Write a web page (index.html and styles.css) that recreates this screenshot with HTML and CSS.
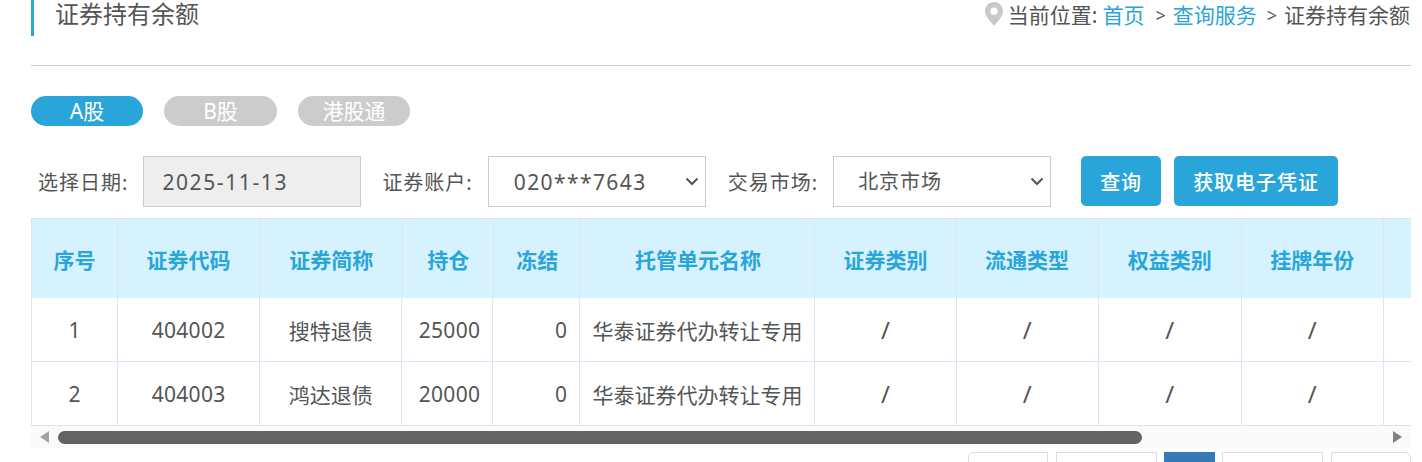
FILE: index.html
```html
<!DOCTYPE html>
<html lang="zh-CN">
<head>
    <meta charset="UTF-8">
    <title>证券持有余额</title>
    <link rel="stylesheet" href="styles.css">
</head>
<body>
    <div class="container">
        <div class="page-head">
            <h2 class="page-title">证券持有余额</h2>
            <div class="crumbs">
                <svg class="pin" width="18" height="24" viewBox="0 0 18 24">
                    <path fill-rule="evenodd" fill="#c9c9c9" d="M9 0C4 0 0 4 0 9c0 6 6 11 9 15 3-4 9-9 9-15 0-5-4-9-9-9zm0 5.5a3.7 3.7 0 1 1 0 7.4 3.7 3.7 0 0 1 0-7.4z"/>
                </svg>
                <span>当前位置:</span>
                <a href="#" class="first">首页</a>
                <span class="sep wide-sep">&gt;</span>
                <a href="#">查询服务</a>
                <span class="sep">&gt;</span>
                <span>证券持有余额</span>
            </div>
        </div>

        <div class="tabs">
            <a href="#" class="tab active">A股</a>
            <a href="#" class="tab mid">B股</a>
            <a href="#" class="tab">港股通</a>
        </div>

        <div class="search">
            <label class="first-label">选择日期:</label>
            <input class="field date" type="text" value="2025-11-13" readonly>
            <label class="account-label">证券账户:</label>
            <select class="field account">
                <option>020***7643</option>
            </select>
            <label>交易市场:</label>
            <select class="field">
                <option>北京市场</option>
            </select>
            <button class="btn query">查询</button>
            <button class="btn">获取电子凭证</button>
        </div>

        <div class="table-wrap">
            <table class="grid head">
                <colgroup>
                    <col class="c1"><col class="c2"><col class="c3"><col class="c4"><col class="c5">
                    <col class="c6"><col class="c7"><col class="c8"><col class="c9"><col class="c10"><col class="c11">
                </colgroup>
                <tr>
                    <th>序号</th><th>证券代码</th><th>证券简称</th><th>持仓</th><th>冻结</th>
                    <th>托管单元名称</th><th>证券类别</th><th>流通类型</th><th>权益类别</th><th>挂牌年份</th><th></th>
                </tr>
            </table>
            <table class="grid body">
                <colgroup>
                    <col class="c1"><col class="c2"><col class="b3"><col class="c4"><col class="c5">
                    <col class="b6"><col class="c7"><col class="c8"><col class="c9"><col class="c10"><col class="c11">
                </colgroup>
                <tr>
                    <td>1</td><td class="code">404002</td><td>搜特退债</td><td class="num">25000</td><td class="num">0</td>
                    <td>华泰证券代办转让专用</td><td class="na">/</td><td class="na">/</td><td class="na">/</td><td class="na">/</td><td></td>
                </tr>
                <tr>
                    <td>2</td><td class="code">404003</td><td>鸿达退债</td><td class="num">20000</td><td class="num">0</td>
                    <td>华泰证券代办转让专用</td><td class="na">/</td><td class="na">/</td><td class="na">/</td><td class="na">/</td><td></td>
                </tr>
            </table>
        </div>

        <div class="scrollbar">
            <span class="arrow left"></span>
            <div class="track"><div class="thumb"></div></div>
            <span class="arrow right"></span>
        </div>

        <ul class="pager">
            <li class="end-l"></li>
            <li class="wide"></li>
            <li class="current"></li>
            <li class="wide"></li>
            <li class="end-r"></li>
        </ul>
    </div>
</body>
</html>
```

FILE: styles.css
```css
html, body {
    height: 462px;
    overflow: hidden;
}

body {
    margin: 0;
    background: #fff;
    color: #555;
    font-family: "Noto Sans", "Noto Sans CJK SC", sans-serif;
}

a {
    color: #29a5d9;
    text-decoration: none;
}

.container {
    width: 1380px;
    margin-left: 31px;
}

/* title row */
.page-head {
    display: flex;
    justify-content: space-between;
    height: 65px;
    border-bottom: 1px solid #ccc;
}

.page-title {
    height: 36px;
    margin: 0;
    padding-left: 21px;
    border-left: 3px solid #29a5d9;
    font-size: 24px;
    font-weight: normal;
    line-height: 28px;
}

.crumbs {
    display: flex;
    align-items: flex-start;
    height: 30px;
    margin-right: 1px;
    font-size: 21px;
    line-height: 30px;
    white-space: nowrap;
}

.pin {
    margin: 2px 5px 0 0;
}

.crumbs .first {
    margin-left: 5px;
}

.sep {
    margin: 0 7px 0 10px;
    font-size: 18px;
}

.wide-sep {
    margin-left: 11px;
}

/* tabs */
.tabs {
    display: flex;
    gap: 21px;
    margin-top: 30px;
}

.tab {
    width: 112px;
    height: 30px;
    border-radius: 15px;
    background: #ccc;
    color: #fff;
    font-size: 21px;
    line-height: 30px;
    text-align: center;
}

.tab.mid {
    width: 113px;
}

.tab.active {
    background: #29a5d9;
}

/* search form */
.search {
    display: flex;
    align-items: flex-start;
    margin-top: 30px;
    height: 51px;
}

.search label {
    margin: 0 15px 0 22px;
    font-size: 20px;
    line-height: 53px;
    letter-spacing: 1px;
    white-space: nowrap;
}

.search .first-label {
    margin: 0 15px 0 7px;
}

.search .account-label {
    margin-left: 21px;
}

.field {
    box-sizing: border-box;
    width: 218px;
    height: 51px;
    padding: 0 0 0 24px;
    border: 1px solid #ccc;
    border-radius: 0;
    background: #fff url("data:image/svg+xml,%3Csvg xmlns='http://www.w3.org/2000/svg' width='14' height='9' viewBox='0 0 14 9'%3E%3Cpath d='M1.5 1.5 7 7l5.5-5.5' fill='none' stroke='%23555' stroke-width='2'/%3E%3C/svg%3E") no-repeat right 6px center;
    color: #555;
    font-family: inherit;
    font-size: 20px;
    letter-spacing: 1px;
    appearance: none;
}

.date {
    padding-left: 18px;
    background: #eee;
    font-size: 21px;
    letter-spacing: 1.6px;
}

.account {
    padding-left: 25px;
    font-size: 21px;
    letter-spacing: 1.4px;
}

.btn {
    height: 50px;
    margin-left: 13px;
    padding: 0 19px;
    border: none;
    border-radius: 5px;
    background: #29a5d9;
    color: #fff;
    font-family: inherit;
    font-size: 20px;
    font-weight: 500;
    letter-spacing: 1px;
}

.query {
    margin-left: 30px;
}

/* table */
.table-wrap {
    margin-top: 11px;
    overflow: hidden;
}

.grid {
    width: 1500px;
    table-layout: fixed;
    border-collapse: collapse;
}

.grid th,
.grid td {
    padding: 0 12px;
    border: 1px solid #dbe6f5;
    font-size: 21px;
    text-align: center;
    white-space: nowrap;
}

.grid th {
    height: 79px;
    background: #d5f2fe;
    color: #29a5d9;
    font-weight: bold;
}

.grid td {
    height: 63px;
}

.grid td.num {
    text-align: right;
    letter-spacing: .3px;
}

.grid td.code {
    letter-spacing: .3px;
}

.grid td.na {
    font-size: 24px;
}

.head tr:first-child th {
    border-bottom: none;
}

.body tr:first-child td {
    border-top: none;
}

.c1 { width: 86px; }
.c2 { width: 142px; }
.c3 { width: 143px; }
.b3 { width: 142px; }
.c4 { width: 91px; }
.c5 { width: 87px; }
.c6 { width: 234px; }
.b6 { width: 235px; }
.c7 { width: 141px; }
.c8 { width: 142px; }
.c9 { width: 143px; }
.c10 { width: 142px; }
.c11 { width: 147px; }

/* scrollbar */
.scrollbar {
    display: flex;
    align-items: center;
    height: 22px;
    padding: 0 9px;
    background: #fafafa;
}

.arrow {
    width: 0;
    height: 0;
    border-top: 6px solid transparent;
    border-bottom: 6px solid transparent;
}

.arrow.left {
    border-right: 9px solid #a3a3a3;
}

.arrow.right {
    border-left: 9px solid #808080;
}

.track {
    flex: 1;
    padding: 0 251px 0 9px;
}

.thumb {
    height: 13px;
    border-radius: 7px;
    background: #636363;
}

/* pager, only its top edge is in view */
.pager {
    display: flex;
    justify-content: flex-end;
    gap: 8px;
    height: 40px;
    margin: 4px 0 0;
    padding: 0;
    list-style: none;
}

.pager li {
    box-sizing: border-box;
    width: 80px;
    border: 1px solid #ddd;
}

.pager .wide {
    width: 101px;
}

.pager .current {
    width: 51px;
    margin: 0 -1px;
    border-color: #337ab7;
    background: #337ab7;
}

.pager .end-l {
    border-top-left-radius: 6px;
}

.pager .end-r {
    border-top-right-radius: 6px;
}
```
